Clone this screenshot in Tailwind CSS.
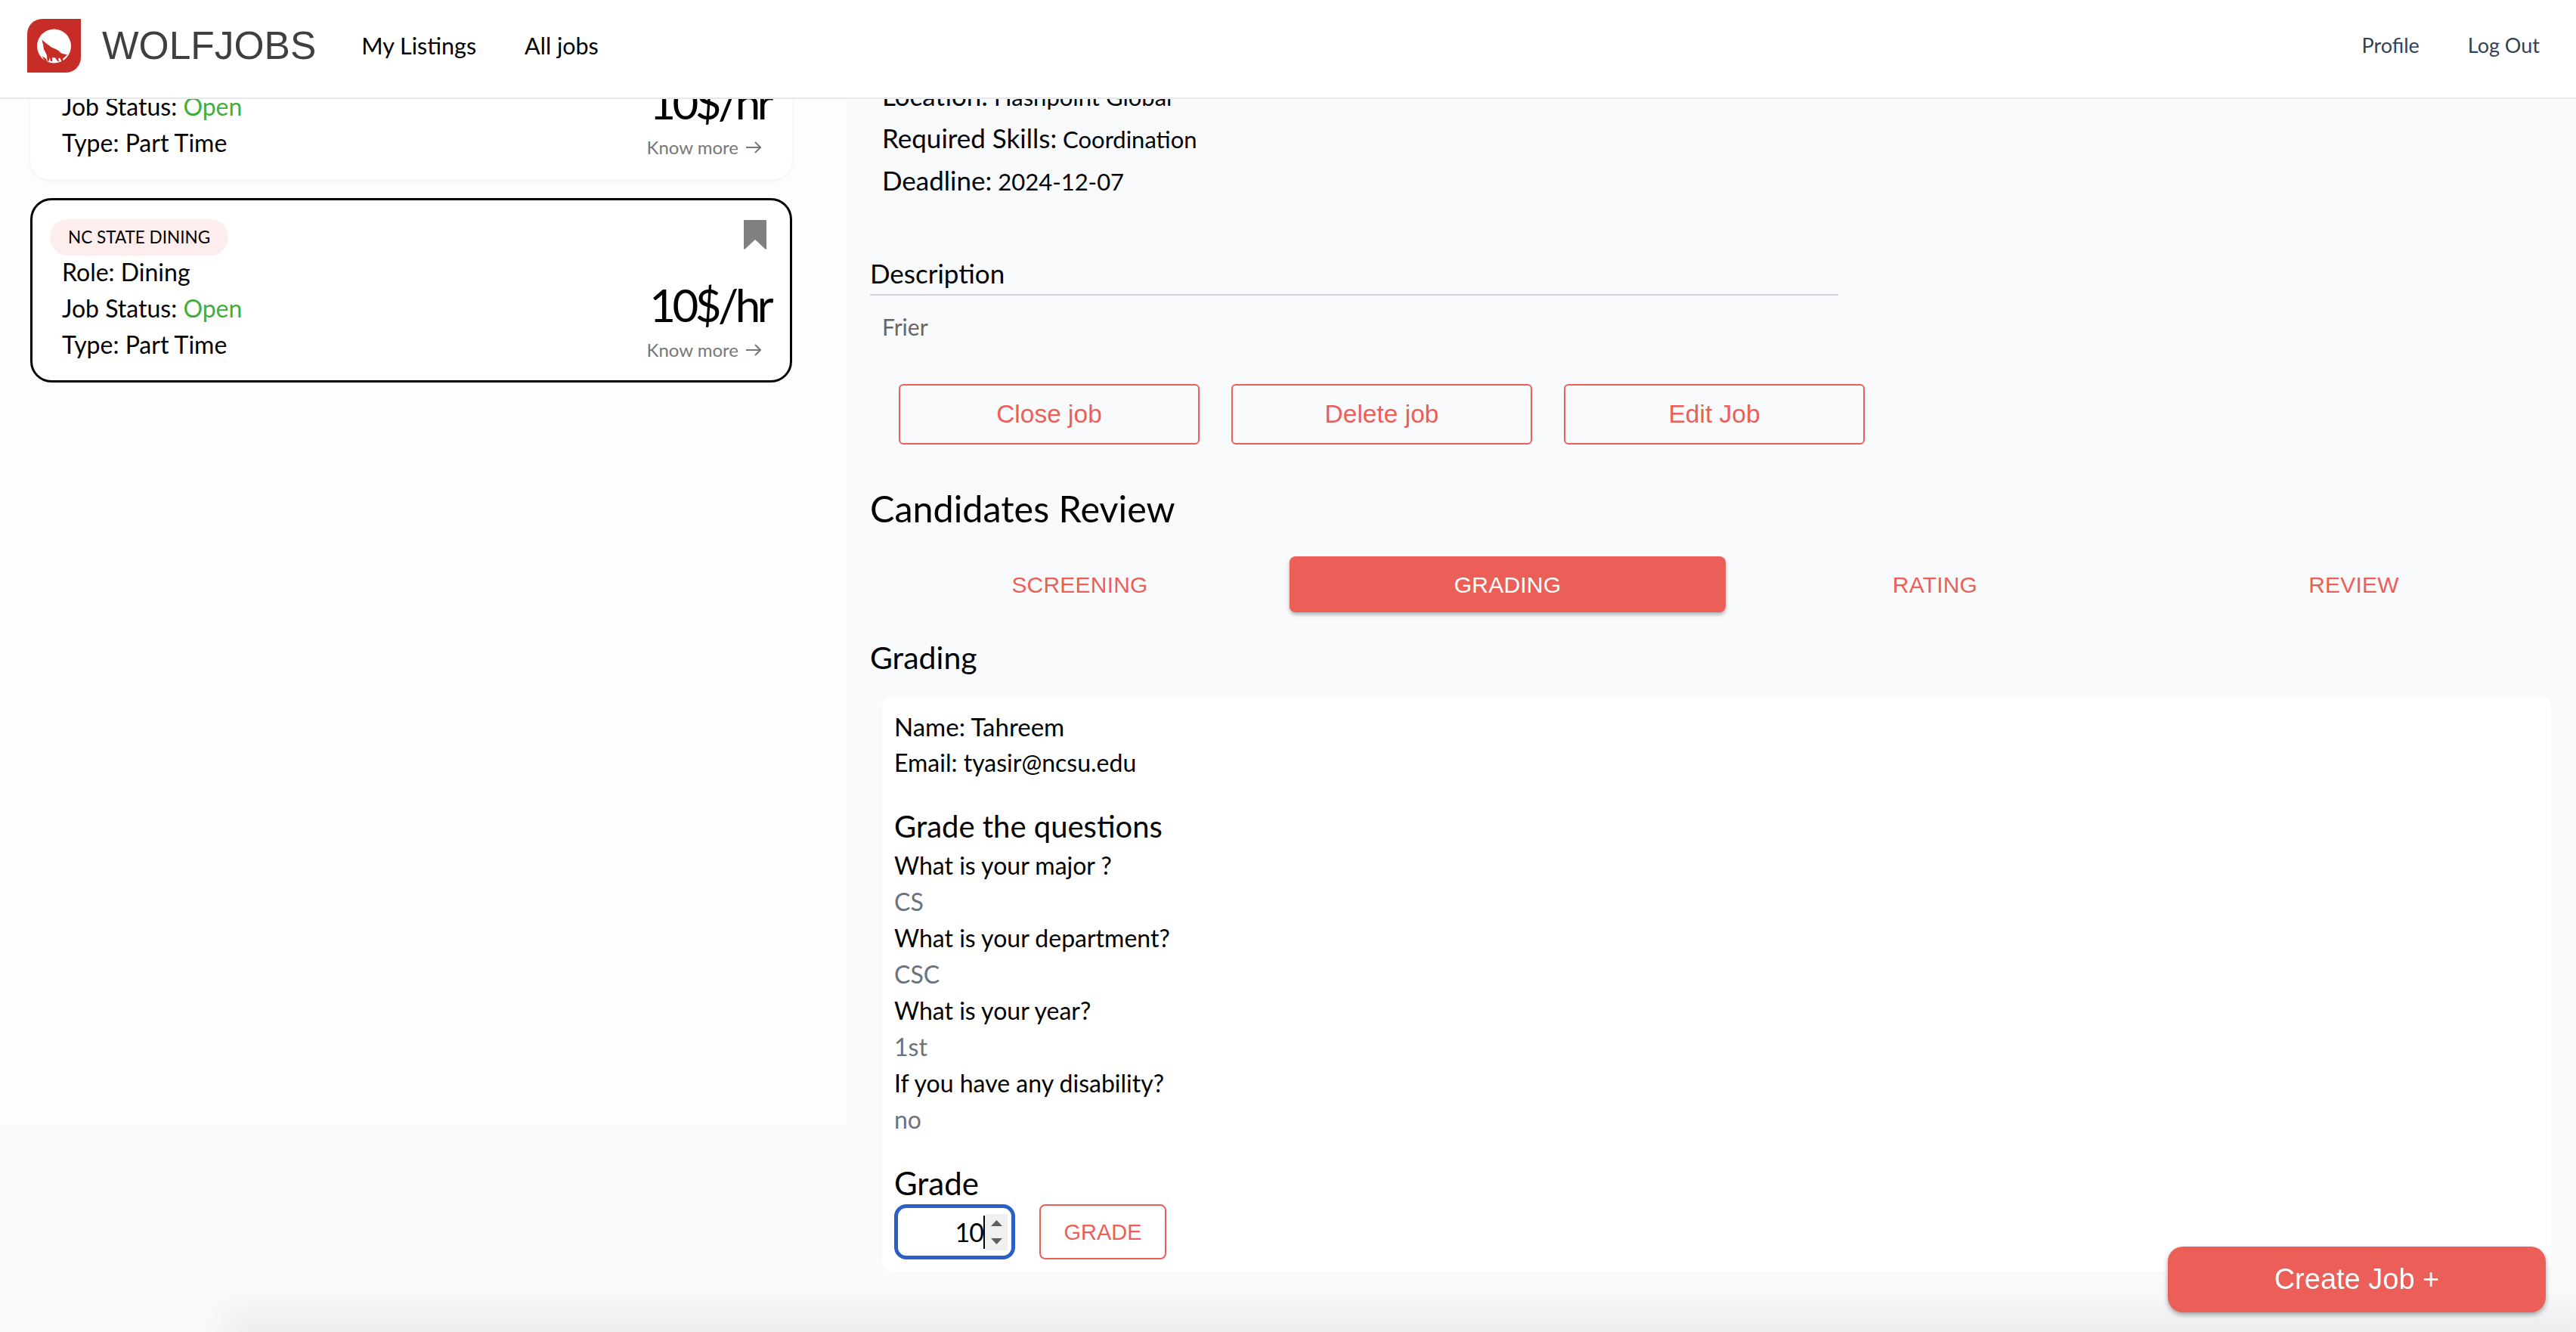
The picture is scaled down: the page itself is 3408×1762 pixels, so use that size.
<!DOCTYPE html>
<html lang="en">
<head>
    <meta charset="UTF-8">
    <title>WolfJobs</title>
    <script src="https://cdn.jsdelivr.net/npm/@tailwindcss/browser@4"></script>
</head>
<body class="bg-[#f9fafb] text-black font-['Lato',sans-serif] h-screen overflow-hidden">

    <!-- top bar -->
    <header class="fixed top-0 inset-x-0 z-20 h-[131px] bg-white border-b-2 border-[#e5e7eb] flex items-center pl-9 pr-12 pb-1">
        <svg class="w-[71px] h-[71px] shrink-0 -mt-1" viewBox="0 0 71 71">
            <path d="M20 0H71V51A20 20 0 0 1 51 71H0V20A20 20 0 0 1 20 0Z" fill="#c62d26"/>
            <circle cx="35.5" cy="36" r="22.5" fill="#fff"/>
            <path d="M19.3 27.5L23 30.5 26 33 32 37.5 38 40 42 42.5 45 45.5 53 47.5 49.5 50.5 47 53 48 56.5 45.5 56 43 51.5 41 52.5 42.5 56.5 40.5 56 37 51.5 33 51 33 56 31 56 30 51 28.5 56 26.5 55.5 26 48 22 40 21 34Z" fill="#c62d26"/>
            <path d="M20 49L25 53 26 56 28 57.5 24.5 56.5 21.5 53Z" fill="#c62d26"/>
        </svg>
        <span class="ml-7 -mt-1 text-[51.5px] leading-none font-['Liberation_Sans',sans-serif] text-[#3f3f3f]">WOLFJOBS</span>
        <nav class="ml-[60px] -mt-1 flex gap-[64px] text-[30.5px]">
            <a>My Listings</a>
            <a>All jobs</a>
        </nav>
        <nav class="ml-auto -mt-1 flex gap-[64px] text-[27px] text-[#334155]">
            <a>Profile</a>
            <a>Log Out</a>
        </nav>
    </header>

    <main class="flex items-start -mt-[6px]">
        <!-- job list, first card is scrolled under the top bar -->
        <aside class="w-[1120px] h-[1494px] shrink-0 bg-[#fdfdff] pl-10 pr-[72px] flex flex-col gap-6">
            <article class="h-[244px] rounded-[28px] border-[3px] border-transparent bg-white shadow-[0_2px_6px_rgba(0,0,0,0.05)] pl-[39px] pr-[24px] pt-[120px] relative">
                <p class="text-[32px] leading-[48px]">Job Status: <span class="text-[#3fae3a]">Open</span></p>
                <p class="text-[32px] leading-[48px]">Type: Part Time</p>
                <div class="absolute right-[24px] bottom-[22px] flex flex-col items-end">
                    <p class="pr-[2px] mb-1 text-[60px] leading-[76px] tracking-[-4.5px]">10$/hr</p>
                    <p class="pr-[14px] flex items-center gap-[10px] text-[24px] leading-9 text-[#777]">Know more
                        <svg class="w-5 h-4" viewBox="0 0 20 16" fill="none" stroke="#777" stroke-width="2"><path d="M0 8H19M12 1l7 7-7 7"/></svg>
                    </p>
                </div>
            </article>
            <article class="h-[244px] rounded-[28px] border-[3px] border-black bg-white pl-[39px] pr-[24px] pt-[23px] relative">
                <span class="block w-fit -ml-4 mt-[2px] -mb-[2px] h-12 px-6 rounded-full bg-[#fdeded] text-[22.5px] leading-[48px]">NC STATE DINING</span>
                <p class="text-[32px] leading-[48px]">Role: Dining</p>
                <p class="text-[32px] leading-[48px]">Job Status: <span class="text-[#3fae3a]">Open</span></p>
                <p class="text-[32px] leading-[48px]">Type: Part Time</p>
                <svg class="absolute top-[26px] right-[31px] w-[30px] h-[39px]" viewBox="0 0 30 39"><path d="M1 0H29a1 1 0 0 1 1 1V38l-1 1L15 26 1 39 0 38V1a1 1 0 0 1 1-1Z" fill="#808080"/></svg>
                <div class="absolute right-[24px] bottom-[22px] flex flex-col items-end">
                    <p class="pr-[2px] mb-1 text-[60px] leading-[76px] tracking-[-4.5px]">10$/hr</p>
                    <p class="pr-[14px] flex items-center gap-[10px] text-[24px] leading-9 text-[#777]">Know more
                        <svg class="w-5 h-4" viewBox="0 0 20 16" fill="none" stroke="#777" stroke-width="2"><path d="M0 8H19M12 1l7 7-7 7"/></svg>
                    </p>
                </div>
            </article>
        </aside>

        <!-- job detail -->
        <section class="flex-1 bg-[#f9fafc] h-[1768px] pt-[106px] pl-[31px] pr-[17px]">
            <div class="pl-4 text-[31px] leading-[56px]">
                <p class="h-14"><span class="text-[35px] leading-none">Location:</span> Hashpoint Global</p>
                <p class="h-14"><span class="text-[35px] leading-none">Required Skills:</span> Coordination</p>
                <p class="h-14"><span class="text-[35px] leading-none">Deadline:</span> 2024-12-07</p>
            </div>

            <h3 class="mt-[69px] w-[1281px] pb-1 border-b-2 border-[#d1d5db] text-[35px] leading-[48px]">Description</h3>
            <p class="mt-[17px] pl-4 text-[30px] leading-[48px] text-[#666]">Frier</p>

            <div class="mt-[52px] ml-[38px] flex gap-[42px] font-['Liberation_Sans',sans-serif] text-[33.5px] text-[#ec5f59]">
                <button class="w-[398px] h-20 rounded-md border-2 border-[#ec5f59]">Close job</button>
                <button class="w-[398px] h-20 rounded-md border-2 border-[#ec5f59]">Delete job</button>
                <button class="w-[398px] h-20 rounded-md border-2 border-[#ec5f59]">Edit Job</button>
            </div>

            <h2 class="mt-12 text-[48.5px] leading-[72px]">Candidates Review</h2>

            <div class="mt-7 grid grid-cols-[555px_577px_554px_554px] font-['Liberation_Sans',sans-serif] text-[30px] tracking-[0.2px] text-[#ec5f59]">
                <button class="h-[74px]">SCREENING</button>
                <button class="h-[74px] rounded-lg bg-[#ec5f59] text-white shadow-[0_3px_5px_rgba(0,0,0,0.3)]">GRADING</button>
                <button class="h-[74px]">RATING</button>
                <button class="h-[74px]">REVIEW</button>
            </div>

            <h3 class="mt-8 text-[41px] leading-[56px]">Grading</h3>

            <div class="mt-[23px] ml-4 w-[2208px] h-[761px] rounded-[14px] bg-white pt-4 pl-4 text-[32px] leading-[48px]">
                <p class="text-[33px]">Name: Tahreem</p>
                <p>Email: tyasir@ncsu.edu</p>
                <h4 class="mt-8 text-[40px] leading-[56px]">Grade the questions</h4>
                <p>What is your major ?</p>
                <p class="text-[#6b7280]">CS</p>
                <p>What is your department?</p>
                <p class="text-[#6b7280]">CSC</p>
                <p>What is your year?</p>
                <p class="text-[#6b7280]">1st</p>
                <p>If you have any disability?</p>
                <p class="text-[#6b7280]">no</p>
                <h4 class="mt-8 text-[42px] leading-[56px]">Grade</h4>
                <div class="flex gap-8">
                    <div class="w-40 h-[73px] rounded-2xl border-[5px] border-[#2a5fc8] flex items-center justify-end pr-[5px]">
                        <span class="border-r-2 border-black text-[34px] leading-[44px] tracking-[-1px]">10</span>
                        <span class="w-[30px] h-12 bg-[#f0f0f0] flex flex-col items-center justify-between py-2">
                            <svg class="w-[15px] h-2" viewBox="0 0 15 8"><path d="M7.5 0L15 8H0Z" fill="#5f5f5f"/></svg>
                            <svg class="w-[15px] h-2" viewBox="0 0 15 8"><path d="M0 0H15L7.5 8Z" fill="#5f5f5f"/></svg>
                        </span>
                    </div>
                    <button class="w-[168px] h-[73px] rounded-lg border-2 border-[#ec5f59] font-['Liberation_Sans',sans-serif] text-[29px] text-[#ec5f59]">GRADE</button>
                </div>
            </div>
        </section>
    </main>

    <!-- soft shadow coming up from below the fold -->
    <div class="fixed bottom-0 left-[320px] right-0 h-0 shadow-[0_0_50px_24px_rgba(0,0,0,0.07)]"></div>

    <button class="fixed z-10 left-[2868px] top-[1649px] w-[500px] h-[87px] rounded-[20px] bg-[#ec5f59] text-white font-['Liberation_Sans',sans-serif] text-[38px] shadow-[0_3px_6px_rgba(0,0,0,0.35)]">Create Job +</button>

</body>
</html>
